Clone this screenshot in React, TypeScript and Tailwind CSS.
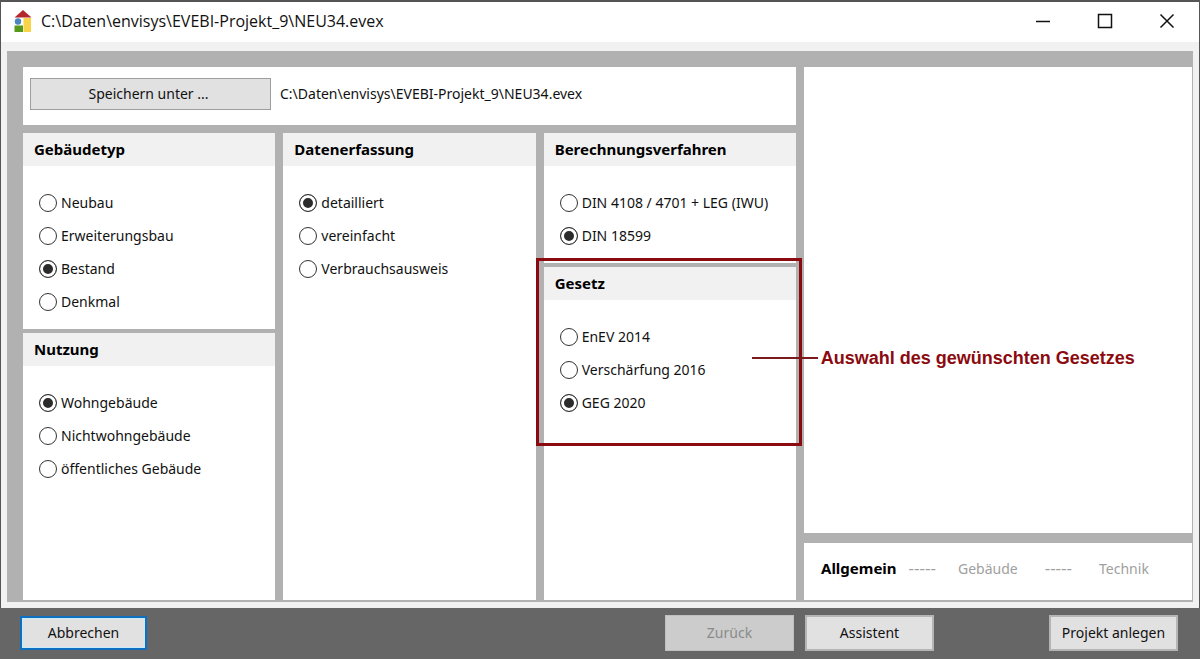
import { useState, type ReactNode } from "react";

type OptionGroupProps = {
  title: string;
  name: string;
  options: string[];
  initial: string;
  grow?: boolean;
  children?: ReactNode;
};

function OptionGroup({ title, name, options, initial, grow, children }: OptionGroupProps) {
  const [value, setValue] = useState(initial);
  return (
    <fieldset className={grow ? "relative min-w-0 flex-1 bg-white" : "relative min-w-0 bg-white"}>
      <legend className="float-left flex h-[33px] w-full items-center bg-[#f1f1f1] px-[11px] text-[15px] font-bold text-black">
        {title}
      </legend>
      <div className="clear-both pt-5 pr-2 pb-[11px] pl-4">
        {options.map((option) => (
          <label key={option} className="flex h-[33px] items-center gap-1 whitespace-nowrap">
            <input
              type="radio"
              name={name}
              value={option}
              checked={value === option}
              onChange={() => setValue(option)}
              className="size-[18px] shrink-0 appearance-none rounded-full border border-[#333333] bg-white checked:bg-[#2b2b2b] checked:shadow-[inset_0_0_0_3px_#ffffff]"
            />
            {option}
          </label>
        ))}
      </div>
      {children}
    </fieldset>
  );
}

function HouseIcon() {
  return (
    <svg width="18" height="23" viewBox="0 0 18 23" aria-hidden="true">
      <path d="M9 0 17.500 7.500H.5z" fill="#b3282d" />
      <rect x="9.500" y="8" width="7.500" height="14" fill="#f8d548" />
      <circle cx="4" cy="11.500" r="3.200" fill="#4a86bd" />
      <rect x="0.500" y="15.500" width="8.500" height="6.500" fill="#559a1c" />
    </svg>
  );
}

function TitleBar() {
  const control = "flex h-full w-[62px] items-center justify-center";
  return (
    <header className="flex h-10 items-center bg-white pr-px pb-[2px] pl-[13px]">
      <HouseIcon />
      <h1 className="ml-[9px] flex-1 font-['Open_Sans',sans-serif] text-base">
        C:\Daten\envisys\EVEBI-Projekt_9\NEU34.evex
      </h1>
      <button type="button" aria-label="Minimieren" className={control}>
        <svg width="16" height="16" viewBox="0 0 16 16" stroke="#111" strokeWidth="1.500">
          <path d="M1 8.500h14" />
        </svg>
      </button>
      <button type="button" aria-label="Maximieren" className={control}>
        <svg width="16" height="16" viewBox="0 0 16 16" fill="none" stroke="#111" strokeWidth="1.500">
          <rect x="1.500" y="1.500" width="13" height="13" />
        </svg>
      </button>
      <button type="button" aria-label="Schließen" className={control}>
        <svg width="16" height="16" viewBox="0 0 16 16" stroke="#111" strokeWidth="1.500">
          <path d="M1.500 1.500l13 13M14.500 1.500l-13 13" />
        </svg>
      </button>
    </header>
  );
}

function Steps() {
  return (
    <ol className="flex h-[57px] items-center bg-white pb-[6px] pl-[17px] whitespace-nowrap text-[#a0a0a0]">
      <li aria-current="step" className="text-[15px] font-bold text-black">
        Allgemein
      </li>
      <li aria-hidden="true" className="ml-3 text-[17px]">-----</li>
      <li className="ml-[22px]">Gebäude</li>
      <li aria-hidden="true" className="ml-[27px] text-[17px]">-----</li>
      <li className="ml-[27px]">Technik</li>
    </ol>
  );
}

function Callout() {
  return (
    <div className="pointer-events-none absolute -top-[9px] -right-[6px] -left-2 z-10 h-[188px] border-[3px] border-[#8b0a0f]">
      <div className="absolute top-[85px] left-[213px] flex items-center gap-[3px] whitespace-nowrap">
        <span className="h-[2px] w-[66px] bg-[#7a1a1c]" />
        <span className="font-['Liberation_Sans',Arial,sans-serif] text-lg leading-6 font-bold text-[#8b0a0f]">
          Auswahl des gewünschten Gesetzes
        </span>
      </div>
    </div>
  );
}

export default function App() {
  return (
    <div className="flex min-h-screen flex-col bg-[#666666] font-['Noto_Sans',sans-serif] text-sm text-[#111111]">
      <div className="flex flex-1 flex-col border-x border-t-2 border-[#555555] bg-[#f1f1f1]">
        <TitleBar />
        <main className="mx-[6px] mt-[9px] mb-[6px] flex flex-1 gap-2 bg-[#b1b1b1] pt-4 pr-px pb-[2px] pl-4">
          <div className="flex min-w-0 flex-[773] flex-col gap-2">
            <section className="flex h-[58px] items-center bg-white px-[7px] pb-1">
              <button type="button" className="h-8 w-[241px] border border-[#9d9d9d] bg-[#e1e1e1] pr-1">
                Speichern unter ...
              </button>
              <span className="ml-[9px]">C:\Daten\envisys\EVEBI-Projekt_9\NEU34.evex</span>
            </section>
            <div className="grid flex-1 grid-cols-3 gap-2">
              <div className="flex flex-col gap-1">
                <OptionGroup
                  title="Gebäudetyp"
                  name="gebaeudetyp"
                  options={["Neubau", "Erweiterungsbau", "Bestand", "Denkmal"]}
                  initial="Bestand"
                />
                <OptionGroup
                  title="Nutzung"
                  name="nutzung"
                  options={["Wohngebäude", "Nichtwohngebäude", "öffentliches Gebäude"]}
                  initial="Wohngebäude"
                  grow
                />
              </div>
              <div className="flex flex-col">
                <OptionGroup
                  title="Datenerfassung"
                  name="datenerfassung"
                  options={["detailliert", "vereinfacht", "Verbrauchsausweis"]}
                  initial="detailliert"
                  grow
                />
              </div>
              <div className="flex flex-col gap-1">
                <OptionGroup
                  title="Berechnungsverfahren"
                  name="berechnungsverfahren"
                  options={["DIN 4108 / 4701 + LEG (IWU)", "DIN 18599"]}
                  initial="DIN 18599"
                />
                <OptionGroup
                  title="Gesetz"
                  name="gesetz"
                  options={["EnEV 2014", "Verschärfung 2016", "GEG 2020"]}
                  initial="GEG 2020"
                  grow
                >
                  <Callout />
                </OptionGroup>
              </div>
            </div>
          </div>
          <aside className="flex min-w-0 flex-[388] flex-col gap-[10px]">
            <div className="flex-1 bg-white" />
            <Steps />
          </aside>
        </main>
      </div>
      <footer className="flex h-[51px] items-center pr-[22px] pb-[2px] pl-5">
        <button
          type="button"
          className="h-[34px] w-[127px] border-2 border-[#0f6fc0] bg-[#e1e1e1] shadow-[inset_0_0_0_1px_#c8ecfa]"
        >
          Abbrechen
        </button>
        <div className="ml-auto flex gap-[11px]">
          <button type="button" disabled className="h-9 w-[129px] border border-[#bfbfbf] bg-[#cccccc] text-[#8a8a8a]">
            Zurück
          </button>
          <button type="button" className="h-9 w-[129px] border-2 border-[#b5b5b5] bg-[#e1e1e1]">
            Assistent
          </button>
        </div>
        <button type="button" className="ml-[115px] h-9 w-[129px] border-2 border-[#b5b5b5] bg-[#e1e1e1] whitespace-nowrap">
          Projekt anlegen
        </button>
      </footer>
    </div>
  );
}
